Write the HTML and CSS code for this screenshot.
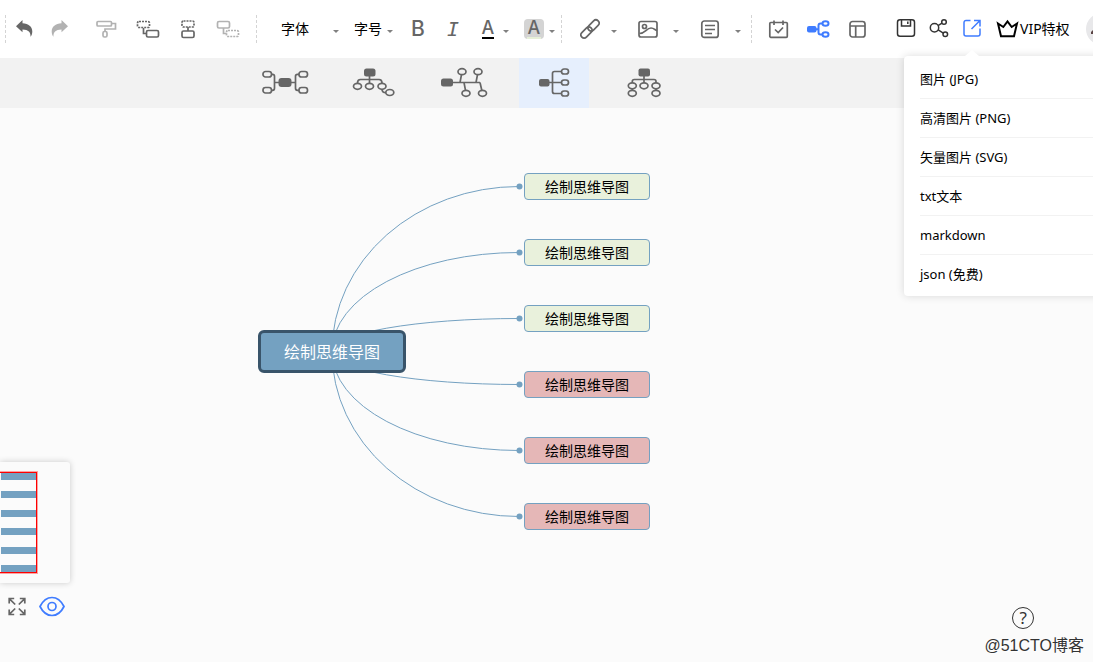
FILE: index.html
```html
<!DOCTYPE html>
<html lang="zh-CN">
<head>
<meta charset="utf-8">
<title>绘制思维导图</title>
<link rel="stylesheet" href="styles.css">
</head>
<body>
<header class="toolbar">
  <div class="group history">
    <button class="tool" aria-label="撤销"><svg width="24" height="24"><path class="solid" d="M4 9.300 10.500 3v3.200c6 .3 9.800 3.300 9.800 8.200 0 2.200-.6 4-1.800 5.300.3-4.200-2-7.200-8-7.200V15.300z"/></svg></button>
    <button class="tool muted" aria-label="恢复"><svg width="24" height="24"><path class="solid" d="M20 9.300 13.500 3v3.200c-6 .3-9.800 3.300-9.800 8.200 0 2.200.6 4 1.800 5.300-.3-4.200 2-7.200 8-7.200v2.800z"/></svg></button>
  </div>
  <div class="group topics">
    <button class="tool muted" aria-label="格式刷"><svg width="26" height="24"><rect x="3" y="4.500" width="14.500" height="4.500" rx="1"/><path d="M17.500 6.500h4v5.500H11v2.500"/><rect x="9" y="14.500" width="4" height="5.500" rx="1.500"/></svg></button>
    <button class="tool" aria-label="子主题"><svg width="24" height="24"><rect class="dash" x="1.500" y="4.500" width="12" height="6" rx="1.500"/><path d="M7.500 11v5.500h3"/><rect x="10.500" y="13.500" width="12" height="6.500" rx="1.500"/></svg></button>
    <button class="tool" aria-label="同级主题"><svg width="24" height="24"><rect class="dash" x="6" y="4" width="12" height="6" rx="1.500"/><path d="M12 10v4"/><rect x="6" y="14" width="12" height="6.500" rx="1.500"/></svg></button>
    <button class="tool muted" aria-label="父主题"><svg width="24" height="24"><rect x="1.500" y="4.500" width="12" height="6.500" rx="1.500"/><path d="M7.500 11v5.500h3"/><rect class="dash" x="10.500" y="13.500" width="12" height="6" rx="1.500"/></svg></button>
  </div>
  <div class="group text-tools">
    <button class="tool pick pick-font">字体<i class="caret"></i></button>
    <button class="tool pick pick-size">字号<i class="caret"></i></button>
    <button class="tool letter bold" aria-label="加粗">B</button>
    <button class="tool letter italic" aria-label="斜体">I</button>
    <button class="tool color" aria-label="文字颜色"><span class="swatch">A</span><i class="caret"></i></button>
    <button class="tool color" aria-label="背景颜色"><span class="swatch filled">A</span><i class="caret"></i></button>
  </div>
  <div class="group insert">
    <button class="tool drop link" aria-label="链接"><svg width="20" height="24"><g transform="rotate(-45 10 12)"><rect x="-1.500" y="8.800" width="13" height="6.400" rx="3.200"/><rect x="8.500" y="8.800" width="13" height="6.400" rx="3.200"/></g></svg><i class="caret"></i></button>
    <button class="tool drop" aria-label="图片"><svg width="20" height="24"><rect x="1" y="4.500" width="18" height="15.500" rx="2"/><circle cx="6.500" cy="9.500" r="2"/><path d="M1.500 16.500c5.500 0 7-5.500 11.500-5.500 3 0 4 2 6 2.500"/></svg><i class="caret"></i></button>
    <button class="tool drop" aria-label="备注"><svg width="20" height="24"><rect x="1.800" y="4" width="16.400" height="16.400" rx="2.500"/><path d="M5 8.500h10M5 12.500h10M5 16.500h7"/></svg><i class="caret"></i></button>
  </div>
  <div class="group views">
    <button class="tool" aria-label="任务"><svg width="24" height="24"><rect x="2.800" y="5.500" width="17.500" height="14.800" rx="1"/><path d="M7 3.500V8M16 3.500V8M8 12.500l3.200 3 4.800-5"/></svg></button>
    <button class="tool blue" aria-label="结构"><svg width="24" height="24"><rect class="solid" x="1" y="9" width="9.500" height="6.500" rx="2"/><path class="heavy" d="M10 12.200h3M16.500 6.500h-2q-2 0-2 2v7q0 2 2 2h2"/><ellipse class="heavy" cx="19.500" cy="6.500" rx="3" ry="2.200"/><ellipse class="heavy" cx="19.500" cy="17.500" rx="3" ry="2.200"/></svg></button>
    <button class="tool" aria-label="布局"><svg width="24" height="24"><rect x="5" y="4.500" width="15" height="15.500" rx="2.500"/><path d="M5 9h15M10.700 9v11"/></svg></button>
  </div>
  <div class="group files">
    <button class="tool dark" aria-label="保存"><svg width="24" height="24"><rect x="3.500" y="2.800" width="17" height="16.500" rx="2.500"/><path d="M7.500 3v6h9V3M13.800 4.500V7"/></svg></button>
    <button class="tool dark" aria-label="分享"><svg width="24" height="24"><circle cx="7.500" cy="10.800" r="4.200"/><circle cx="17" cy="5" r="2.300"/><circle cx="18.300" cy="17.300" r="2.300"/><path d="M11 8.600l4-2.400M11.200 12.900l5.100 3.200"/></svg></button>
    <div class="export">
      <button class="tool blue" aria-label="导出" aria-expanded="true"><svg width="24" height="24"><path d="M10.500 3.500H6a2 2 0 0 0-2 2V17a2 2 0 0 0 2 2h12a2 2 0 0 0 2-2v-5.500M11.500 12 20 3.500M14 3.500h6v6"/></svg></button>
      <div class="menu">
        <button class="menu-item">图片 (JPG)</button>
        <button class="menu-item">高清图片 (PNG)</button>
        <button class="menu-item">矢量图片 (SVG)</button>
        <button class="menu-item">txt文本</button>
        <button class="menu-item">markdown</button>
        <button class="menu-item">json (免费)</button>
      </div>
    </div>
  </div>
  <a class="vip" href="#vip"><svg width="23" height="24"><path d="M2 6.500 7.300 10 11.500 4.500 15.700 10 21 6.500 18 19.200H5z"/></svg>VIP特权</a>
  <button class="avatar" aria-label="账户"><svg width="32" height="32"><circle class="face" cx="16" cy="16" r="16"/><path class="hair" d="M5 19l3-3v5H5z"/></svg></button>
</header>

<nav class="structures" aria-label="结构">
  <button class="structure" aria-label="思维导图"><svg width="50" height="34"><rect class="solid" x="19.500" y="12" width="13" height="9" rx="3"/><path d="M12 8.300h1.500q2 0 2 2v12q0 2-2 2H12M15.500 16.500H20M32 16.500h4.500M40 8.300h-1.500q-2 0-2 2v12q0 2 2 2H40"/><rect x="4" y="5.500" width="8.500" height="5.500" rx="2.500"/><rect x="4" y="21.500" width="8.500" height="5.500" rx="2.500"/><rect x="40" y="5.500" width="8.500" height="5.500" rx="2.500"/><rect x="40" y="21.500" width="8.500" height="5.500" rx="2.500"/></svg></button>
  <button class="structure" aria-label="树状图"><svg width="50" height="34"><rect class="solid" x="15" y="2.500" width="11.500" height="8" rx="2.500"/><path d="M20.500 10v7M8.500 17q0-3.500 3-3.500H30q3 0 3 3.500M33 23q0 3.700 4 3.700"/><ellipse cx="8.500" cy="20.300" rx="4" ry="3"/><ellipse cx="20.500" cy="20.300" rx="4" ry="3"/><ellipse cx="33" cy="20.300" rx="4" ry="3"/><ellipse cx="40.800" cy="26.500" rx="4" ry="3"/></svg></button>
  <button class="structure" aria-label="鱼骨图"><svg width="50" height="34"><rect class="solid" x="2" y="12.500" width="12" height="8" rx="2.500"/><path d="M14 16.500h27M22.500 8.700l-1.500 7.800M25 16.500l1.500 7.800M38.500 8.700 37 16.500M41 16.500l1.800 7.800"/><ellipse cx="23" cy="5.700" rx="4" ry="3"/><ellipse cx="39" cy="5.700" rx="4" ry="3"/><ellipse cx="27" cy="27.300" rx="4" ry="3"/><ellipse cx="43.500" cy="27.300" rx="4" ry="3"/></svg></button>
  <button class="structure active" aria-label="右侧导图"><svg width="50" height="34"><rect class="solid" x="10" y="13" width="10.500" height="7.500" rx="2"/><path d="M20 16.500h12.500M32.500 5.500h-7q-2 0-2 2v18q0 2 2 2h7"/><rect x="32.500" y="3" width="7" height="5" rx="2.500"/><rect x="32.500" y="14" width="7" height="5" rx="2.500"/><rect x="32.500" y="25" width="7" height="5" rx="2.500"/></svg></button>
  <button class="structure" aria-label="组织结构图"><svg width="50" height="34"><rect class="solid" x="19.500" y="2.500" width="11.500" height="8" rx="2"/><path d="M25 10v7M13.300 17v-1.500q0-2 2-2H35q2 0 2 2V17M13.300 22.700v1.600M37 22.700v1.600"/><ellipse cx="13.300" cy="19.800" rx="4" ry="3"/><ellipse cx="25" cy="19.800" rx="4" ry="3"/><ellipse cx="37" cy="19.800" rx="4" ry="3"/><ellipse cx="13.300" cy="27.300" rx="4" ry="3"/><ellipse cx="37" cy="27.300" rx="4" ry="3"/></svg></button>
</nav>

<main class="canvas">
  <svg class="links" width="660" height="440">
    <path d="M332 243.500A187 165 0 0 1 519 78.500M332 243.500A187 99 0 0 1 519 144.500M332 243.500A187 33 0 0 1 519 210.500M332 243.500A187 33 0 0 0 519 276.500M332 243.500A187 99 0 0 0 519 342.500M332 243.500A187 165 0 0 0 519 408.500"/>
    <circle cx="519.500" cy="78.500" r="3"/><circle cx="519.500" cy="144.500" r="3"/><circle cx="519.500" cy="210.500" r="3"/><circle cx="519.500" cy="276.500" r="3"/><circle cx="519.500" cy="342.500" r="3"/><circle cx="519.500" cy="408.500" r="3"/>
  </svg>
  <div class="root">绘制思维导图</div>
  <div class="branches">
    <div class="node">绘制思维导图</div>
    <div class="node">绘制思维导图</div>
    <div class="node">绘制思维导图</div>
    <div class="node red">绘制思维导图</div>
    <div class="node red">绘制思维导图</div>
    <div class="node red">绘制思维导图</div>
  </div>

  <div class="navigator">
    <div class="minimap">
      <div class="viewport"><i class="bar"></i><i class="bar"></i><i class="bar"></i><i class="bar"></i><i class="bar"></i><i class="bar"></i></div>
    </div>
    <div class="nav-buttons">
      <button class="tool" aria-label="全屏"><svg width="18" height="24"><path d="M1.200 8.500v-5h5M1.500 3.800l5.700 5.700M11.800 3.500h5v5M16.500 3.800l-5.700 5.700M1.200 14.500v5h5M1.500 19.200l5.700-5.700M11.800 19.500h5v-5M16.500 19.200l-5.700-5.700"/></svg></button>
      <button class="tool blue" aria-label="显示导航"><svg width="26" height="24"><path d="M1 11.500C4 5.500 8 2.500 13 2.500s9 3 12 9c-3 6-7 9-12 9s-9-3-12-9z"/><circle cx="13" cy="11.500" r="4"/></svg></button>
    </div>
  </div>

  <div class="corner">
    <button class="help" aria-label="帮助">?</button>
    <span class="watermark">@51CTO博客</span>
  </div>
</main>
</body>
</html>
```
FILE: styles.css
```css
* { box-sizing: border-box; }

body {
  margin: 0;
  min-height: 100vh;
  display: flex;
  flex-direction: column;
  overflow: hidden;
  background: #fbfbfb;
  color: #000;
  font: 14px/20px "Noto Sans", "Noto Sans CJK SC", sans-serif;
}

button {
  margin: 0;
  padding: 0;
  border: 0;
  background: none;
  color: inherit;
  font: inherit;
  cursor: pointer;
}

svg {
  display: block;
  flex: none;
  fill: none;
  stroke: currentColor;
  stroke-width: 1.7;
}

.solid { fill: currentColor; stroke: none; }
.dash { stroke-dasharray: 2 1; }
.heavy { stroke-width: 2; }

/* Toolbar */
.toolbar {
  display: flex;
  align-items: center;
  height: 58px;
  padding-left: 5px;
  background: #fff;
}

.group {
  display: flex;
  flex: none;
  align-items: center;
  height: 28px;
}

.history { gap: 12px; padding-left: 6px; border-left: 1px dashed #d4d4d4; }
.topics { gap: 16px; margin-left: 22px; padding-right: 16px; border-right: 1px dashed #d4d4d4; }
.text-tools { gap: 15px; padding: 0 6px 0 24px; border-right: 1px dashed #d4d4d4; }
.insert { gap: 21px; padding: 0 10px 0 18px; border-right: 1px dashed #d4d4d4; }
.views { gap: 15px; padding-left: 15px; }
.files { gap: 9px; margin-left: 25px; }

.tool { display: flex; align-items: center; color: #666; }
.muted { color: #b2b2b2; }
.blue { color: #3f7cff; }
.dark { color: #333; }
.dark svg, .export svg { stroke-width: 1.5; }

.caret {
  border: 3px solid transparent;
  border-top-color: #808080;
  border-bottom: 0;
  margin-top: 4px;
}

.pick { justify-content: space-between; color: #000; }
.pick-font { width: 58px; }
.pick-size { width: 39px; }

.letter {
  justify-content: center;
  width: 20px;
  height: 24px;
  font-size: 21px;
  line-height: 24px;
}
.bold { font-family: Inter, sans-serif; font-weight: 500; }
.italic { font-family: "DejaVu Sans Mono", monospace; font-style: italic; font-size: 20px; }

.color { gap: 5px; }
.swatch {
  display: flex;
  justify-content: center;
  width: 20px;
  height: 20px;
  font: 500 18px/17px Inter, sans-serif;
  background: linear-gradient(#000, #000) center bottom / 12px 2px no-repeat;
}
.filled {
  border-radius: 4px;
  background: linear-gradient(#e6efd8, #e6efd8) center bottom / 14px 2px no-repeat, #d4d4d4;
}

.drop { gap: 15px; }
.link { gap: 11px; }

.export { position: relative; }

.menu {
  position: absolute;
  z-index: 5;
  top: 39px;
  left: -56px;
  width: 210px;
  padding: 4px 0 2px 16px;
  border-radius: 4px;
  background: #fff;
  box-shadow: 0 0 8px rgba(0, 0, 0, .14);
}
.menu::before {
  content: "";
  position: absolute;
  top: -6px;
  left: 61px;
  border: 7px solid transparent;
  border-top: 0;
  border-bottom: 6px solid #fff;
}
.menu-item {
  display: block;
  width: 100%;
  height: 39px;
  border-bottom: 1px solid #f2f2f2;
  padding-bottom: 1px;
  font-size: 13px;
  text-align: left;
}
.menu-item:last-child { border-bottom-color: transparent; }

.vip {
  display: flex;
  flex: none;
  align-items: center;
  gap: 1px;
  margin-left: 12px;
  color: #000;
  text-decoration: none;
}
.vip svg { stroke-width: 2; }

.avatar { flex: none; margin-left: 16px; }
.face { fill: #e8e8ea; stroke: none; }
.hair { fill: #5a4444; stroke: none; }

/* Structure bar */
.structures {
  display: flex;
  gap: 20px;
  height: 50px;
  padding-left: 249px;
  background: #f2f2f2;
}
.structure {
  display: flex;
  align-items: center;
  justify-content: center;
  width: 70px;
  color: #666;
}
.active { background: #e6effd; }

/* Map */
.canvas { position: relative; flex: 1; }

.links { position: absolute; top: 0; left: 0; color: #74a1c1; }
.links path { stroke-width: 1; }
.links circle { fill: currentColor; stroke: none; }

.root {
  position: absolute;
  top: 222px;
  left: 258px;
  width: 148px;
  height: 43px;
  border: 3px solid #39546a;
  border-radius: 6px;
  background: #74a1c1;
  color: #fff;
  font-size: 16px;
  line-height: 38px;
  text-align: center;
}

.branches {
  position: absolute;
  top: 65px;
  left: 524px;
  display: grid;
  gap: 39px;
}
.node {
  width: 126px;
  height: 27px;
  border: 1px solid #74a1c1;
  border-radius: 4px;
  background: #e9f1dc;
  line-height: 26px;
  text-align: center;
}
.red { background: #e5b7b7; }

.navigator { position: absolute; left: 0; bottom: 43px; }
.minimap {
  width: 70px;
  height: 121px;
  padding-top: 10px;
  border-radius: 0 3px 3px 0;
  background: #fbfbfb;
  box-shadow: 0 0 6px rgba(0, 0, 0, .2);
}
.viewport {
  display: flex;
  flex-direction: column;
  justify-content: space-between;
  width: 37px;
  height: 101px;
  padding-left: 1px;
  border-style: solid;
  border-width: 1px 1px 1px 0;
  border-color: #ff0000;
  box-shadow: 0 0 0 1px rgba(255, 0, 0, .35);
}
.bar { height: 7px; background: #74a1c1; }
.nav-buttons { display: flex; gap: 13px; margin-top: 12px; padding-left: 8px; }

.corner {
  position: absolute;
  right: 9px;
  bottom: 6px;
  display: flex;
  flex-direction: column;
  align-items: center;
  gap: 7px;
}
.help {
  width: 22px;
  height: 22px;
  margin-right: 22px;
  border: 1px solid #333;
  border-radius: 50%;
  color: #333;
  font-size: 17px;
  line-height: 20px;
}
.watermark {
  color: #333;
  font: 16px/20px "Liberation Sans", "Noto Sans CJK SC", sans-serif;
  text-shadow: 1px 1px 0 #fff;
}
```
